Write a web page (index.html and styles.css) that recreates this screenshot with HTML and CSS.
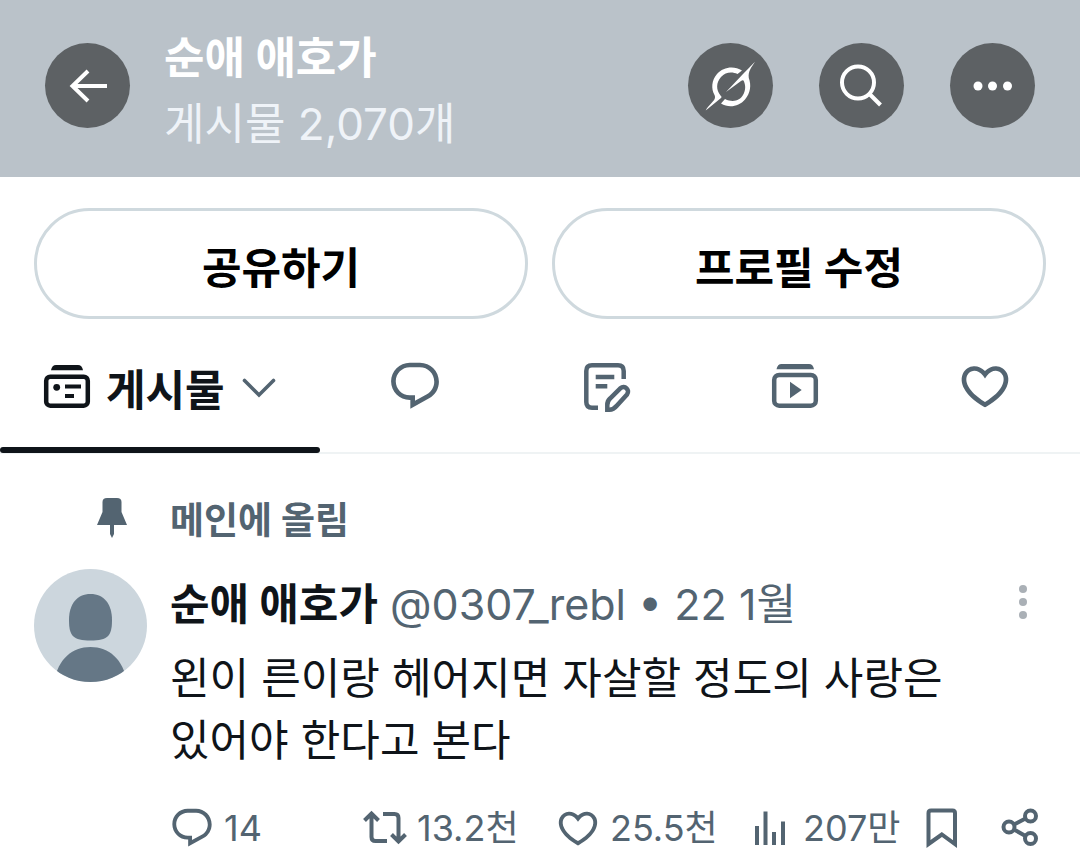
FILE: index.html
```html
<!DOCTYPE html>
<html lang="ko">
<head>
<meta charset="utf-8">
<meta name="viewport" content="width=device-width, initial-scale=1">
<title>순애 애호가</title>
<link rel="stylesheet" href="styles.css">
</head>
<body>
<header class="topbar">
  <button class="round" aria-label="뒤로"><svg viewBox="0 0 85 85"><path d="M62 43H27M43 28L27.500 43L43 58" fill="none" stroke="currentColor" stroke-width="4"/></svg></button>
  <div class="heading">
    <h1 class="title">순애 애호가</h1>
    <p class="subtitle">게시물 2,070개</p>
  </div>
  <div class="tools">
    <button class="round" aria-label="Grok"><svg viewBox="0 0 85 85" fill="currentColor"><path d="M38 49L55 31L67 18.700C63 25 60 28 60.800 35C63.500 42 62.500 50 57 56.500C51 63.500 41 65.500 33 60.500L37 56C45 60 52 57.500 55 52C58 47 57.500 42 56 38.500C55.500 37 54.500 37 53 38Z"/><path d="M54 27.500C46 22.500 35 24 29 31C23.500 37 23 46 26.500 52C28 55 26 57.500 23.500 60C21 63 19 64.500 17.700 67.500L33 55C34 54 33.500 53.500 32.500 52.500C28 47 28 39.500 33 34C37.500 29 44 28.500 49.500 31Z"/></svg></button>
    <button class="round" aria-label="검색"><svg viewBox="0 0 85 85" fill="none" stroke="currentColor" stroke-width="4"><circle cx="39" cy="39.500" r="16"/><path d="M50.500 51L61.500 62"/></svg></button>
    <button class="round" aria-label="더 보기"><svg viewBox="0 0 85 85" fill="currentColor"><circle cx="28" cy="43" r="4.500"/><circle cx="42.500" cy="43" r="4.500"/><circle cx="57.500" cy="43" r="4.500"/></svg></button>
  </div>
</header>
<main>
  <div class="profile-actions">
    <button class="pill">공유하기</button>
    <button class="pill">프로필 수정</button>
  </div>
  <nav class="tabs" aria-label="프로필">
    <button class="tab active">
      <svg class="tab-icon" viewBox="0 0 56 56" fill="none" stroke="currentColor" stroke-width="4.500"><path d="M12 12.300Q13 7 17 7H39Q43 7 44 12.300Z" fill="currentColor" stroke="none"/><rect x="7.200" y="18.700" width="41.600" height="29" rx="4"/><circle cx="17.700" cy="29.300" r="3.400" fill="currentColor" stroke="none"/><path d="M26 28.500H42M26 38H35" stroke-width="4"/></svg>
      <span class="tab-label">게시물</span>
      <svg class="chevron" viewBox="0 0 34 20"><path d="M2.500 2.500L17 17L31.500 2.500" fill="none" stroke="currentColor" stroke-width="3.600" stroke-linecap="round"/></svg>
    </button>
    <button class="tab" aria-label="답글"><svg class="tab-icon" viewBox="0 0 24 24" fill="currentColor"><path d="M1.751 10c0-4.420 3.584-8 8.005-8h4.366c4.490 0 8.129 3.640 8.129 8.130 0 2.960-1.607 5.680-4.196 7.110l-8.054 4.460v-3.690h-.067c-4.490.100-8.183-3.510-8.183-8.010zm8.005-6c-3.317 0-6.005 2.690-6.005 6 0 3.370 2.770 6.080 6.138 6.010l.351-.010h1.761v2.300l5.087-2.810c1.951-1.080 3.163-3.130 3.163-5.360 0-3.390-2.744-6.130-6.129-6.130H9.756z"/></svg></button>
    <button class="tab" aria-label="기사"><svg class="tab-icon" viewBox="-2 0 56 56" fill="none" stroke="currentColor" stroke-width="4.500"><path d="M44.700 21V13Q44.700 7.300 39 7.300H13Q7.300 7.300 7.300 13V44Q7.300 49.700 13 49.700H19"/><path d="M16.700 19H35.300M16.700 28.300H28.300"/><path d="M28.300 51.700V47Q28.300 43 31 40.500L41.500 30.200C45.500 26.500 51.500 32 48 36.500L38 47.500Q34.500 51.700 30.500 51.700Z"/></svg></button>
    <button class="tab" aria-label="동영상"><svg class="tab-icon" viewBox="0 0 56 56" fill="none" stroke="currentColor" stroke-width="4.500"><path d="M9.500 11.200Q10.500 6 14.500 6H42Q46 6 47 11.200Z" fill="currentColor" stroke="none"/><rect x="7.200" y="17" width="41.600" height="30.700" rx="5"/><path d="M23 23.700L34.700 32L23 40.300Z" fill="currentColor" stroke="none"/></svg></button>
    <button class="tab" aria-label="마음에 들어요"><svg class="tab-icon" viewBox="0 0 24 24" fill="currentColor"><path d="M16.697 5.500c-1.222-.060-2.679.510-3.890 2.160l-.805 1.090-.806-1.090C9.984 6.010 8.526 5.440 7.304 5.500c-1.243.070-2.349.780-2.910 1.910-.552 1.120-.633 2.780.479 4.820 1.074 1.970 3.257 4.270 7.129 6.610 3.870-2.340 6.052-4.640 7.126-6.610 1.111-2.040 1.030-3.700.477-4.820-.561-1.130-1.666-1.840-2.908-1.910zm4.187 7.690c-1.351 2.480-4.001 5.120-8.379 7.670l-.503.300-.504-.300c-4.379-2.550-7.029-5.190-8.382-7.670-1.360-2.500-1.410-4.860-.514-6.670.887-1.790 2.647-2.910 4.601-3.010 1.651-.090 3.368.560 4.798 2.010 1.429-1.450 3.146-2.100 4.796-2.010 1.954.100 3.714 1.220 4.601 3.010.896 1.810.846 4.170-.514 6.670z"/></svg></button>
  </nav>
  <article class="post">
    <div class="pinned">
      <svg class="pin" viewBox="0 0 32 40" fill="currentColor"><path d="M6.500 4Q6.500 0 11 0H21Q25.500 0 25.500 4V14L31 27H1L6.500 14Z"/><path d="M14 26H18V36L16 40L14 36Z"/></svg>
      <span class="pinned-label">메인에 올림</span>
    </div>
    <div class="post-main">
      <svg class="avatar" viewBox="0 0 113 113" role="img" aria-label="프로필 사진"><clipPath id="disc"><circle cx="56.500" cy="56.500" r="56.500"/></clipPath><g clip-path="url(#disc)"><path d="M0 0H113V113H0Z" fill="#ccd6dd"/><path d="M35 51C35 35 43 25 56.500 25S78 35 78 51C78 67 74 71.500 56.500 71.500S35 67 35 51Z" fill="#657786"/><path d="M20 113C24 90 38 78 56.500 78S89 90 93 113Z" fill="#657786"/></g></svg>
      <div class="post-content">
        <div class="byline">
          <p class="names"><a class="author" href="#profile">순애 애호가</a> <span class="meta">@0307_rebl • 22 1월</span></p>
          <button class="more" aria-label="게시물 메뉴"><svg viewBox="0 0 10 36" fill="currentColor"><circle cx="5" cy="5" r="4"/><circle cx="5" cy="18" r="4"/><circle cx="5" cy="31" r="4"/></svg></button>
        </div>
        <p class="body">왼이 른이랑 헤어지면 자살할 정도의 사랑은 있어야 한다고 본다</p>
      </div>
    </div>
    <div class="stats">
      <button class="stat" aria-label="답글 14"><svg viewBox="0 0 24 24" fill="currentColor"><path d="M1.751 10c0-4.420 3.584-8 8.005-8h4.366c4.490 0 8.129 3.640 8.129 8.130 0 2.960-1.607 5.680-4.196 7.110l-8.054 4.460v-3.690h-.067c-4.490.100-8.183-3.510-8.183-8.010zm8.005-6c-3.317 0-6.005 2.690-6.005 6 0 3.370 2.770 6.080 6.138 6.010l.351-.010h1.761v2.300l5.087-2.810c1.951-1.080 3.163-3.130 3.163-5.360 0-3.390-2.744-6.130-6.129-6.130H9.756z"/></svg><span>14</span></button>
      <button class="stat" aria-label="재게시 13.2천"><svg viewBox="0 0 46 46" fill="none" stroke="currentColor" stroke-width="4"><path d="M2.500 15.500L9.500 8.500L16.500 15.500M9.500 9V32Q9.500 36 13.500 36H25M29.500 29.500L36.500 36.500L43.500 29.500M36.500 36V13Q36.500 9 32.500 9H21"/></svg><span>13.2천</span></button>
      <button class="stat" aria-label="마음 25.5천"><svg viewBox="0 0 24 24" fill="currentColor"><path d="M16.697 5.500c-1.222-.060-2.679.510-3.890 2.160l-.805 1.090-.806-1.090C9.984 6.010 8.526 5.440 7.304 5.500c-1.243.070-2.349.780-2.910 1.910-.552 1.120-.633 2.780.479 4.820 1.074 1.970 3.257 4.270 7.129 6.610 3.870-2.340 6.052-4.640 7.126-6.610 1.111-2.040 1.030-3.700.477-4.820-.561-1.130-1.666-1.840-2.908-1.910zm4.187 7.690c-1.351 2.480-4.001 5.120-8.379 7.670l-.503.300-.504-.300c-4.379-2.550-7.029-5.190-8.382-7.670-1.360-2.500-1.410-4.860-.514-6.670.887-1.790 2.647-2.910 4.601-3.010 1.651-.090 3.368.560 4.798 2.010 1.429-1.450 3.146-2.100 4.796-2.010 1.954.100 3.714 1.220 4.601 3.010.896 1.810.846 4.170-.514 6.670z"/></svg><span>25.5천</span></button>
      <button class="stat" aria-label="조회 207만"><svg viewBox="0 0 46 46" fill="none" stroke="currentColor" stroke-width="4"><path d="M9 40V21M17.500 40V6.500M26 40V27M35 40V16.500"/></svg><span>207만</span></button>
      <button class="stat" aria-label="북마크"><svg viewBox="0 0 46 46" fill="none" stroke="currentColor" stroke-width="4"><path d="M9.500 39V8Q9.500 5.500 12 5.500H33.500Q36 5.500 36 8V39L22.800 29.500Z"/></svg></button>
      <button class="stat" aria-label="공유"><svg viewBox="0 0 46 46" fill="none" stroke="currentColor" stroke-width="4"><circle cx="12" cy="22" r="5.500"/><circle cx="33.500" cy="11" r="5.500"/><circle cx="33.500" cy="33.500" r="5.500"/><path d="M17 19.500L28.500 13.500M17 24.500L28.500 31"/></svg></button>
    </div>
  </article>
</main>
</body>
</html>
```
FILE: styles.css
```css
* { box-sizing: border-box; }
body {
  margin: 0;
  background: #fff;
  color: #0f1419;
  font-family: Inter, "Noto Sans CJK KR", sans-serif;
  font-size: 43px;
  line-height: 62px;
}
h1, p { margin: 0; font-size: inherit; }
button {
  margin: 0;
  padding: 0;
  border: 0;
  background: none;
  color: inherit;
  font: inherit;
  cursor: pointer;
}
svg { display: block; flex: none; }

.topbar {
  display: flex;
  align-items: flex-start;
  gap: 34px;
  padding: 25px 45px 20px;
  background: #bac2c9;
  color: #fff;
}
.round {
  width: 85px;
  height: 85px;
  margin-top: 18px;
  border-radius: 50%;
  background: #5d6164;
}
.heading { flex: 1; font-size: 44px; line-height: 66px; }
.title { font-weight: 700; }
.subtitle { color: #eff3f8; }
.tools { display: flex; gap: 46px; }

.profile-actions {
  display: grid;
  grid-template-columns: 1fr 1fr;
  gap: 24px;
  padding: 31px 34px 0;
}
.pill {
  height: 111px;
  padding-top: 8px;
  border: 3px solid #cfd9de;
  border-radius: 56px;
  color: #000;
  font-weight: 700;
}

.tabs {
  display: grid;
  grid-template-columns: 32fr 19fr 19fr 19fr 19fr;
  border-bottom: 2px solid #eff3f4;
}
.tab {
  display: flex;
  justify-content: center;
  padding: 39px 0 32px;
  color: #536471;
}
.tab-icon { width: 56px; height: 56px; }
.active {
  position: relative;
  justify-content: flex-start;
  padding-left: 39px;
  color: #0f1419;
}
.active::after {
  content: "";
  position: absolute;
  inset: auto 0 -1px;
  height: 6px;
  border-radius: 3px;
  background: #0f1419;
}
.tab-label { margin-left: 11px; font-weight: 700; line-height: 64px; height: 62px; }
.chevron { width: 34px; height: 20px; margin: 20px 0 0 17px; color: #536471; }

.post { padding: 42px 34px 0; }
.pinned, .post-main {
  display: grid;
  grid-template-columns: 113px 1fr;
  column-gap: 23px;
}
.pinned { color: #536471; font-size: 37px; line-height: 50px; }
.pin { width: 32px; height: 40px; margin-top: 2px; margin-right: 19px; justify-self: end; }
.pinned-label { font-weight: 700; }
.post-main { padding-top: 23px; }
.avatar { width: 113px; height: 113px; }
.byline { display: flex; justify-content: space-between; padding-top: 4px; padding-right: 18px; }
.author { color: inherit; font-weight: 700; text-decoration: none; }
.meta { color: #536471; }
.more { height: 58px; color: #aab0b6; }
.more svg { width: 10px; height: 36px; }
.body { padding-top: 12px; word-break: keep-all; }

.stats {
  display: grid;
  grid-template-columns: 193fr 193fr 193fr 171fr 78fr 46px;
  margin: 34px 3px 0 135px;
  color: #536471;
  font-size: 36px;
  line-height: 46px;
}
.stat { display: flex; align-items: center; gap: 9px; white-space: nowrap; }
.stat svg { width: 46px; height: 46px; }
```
